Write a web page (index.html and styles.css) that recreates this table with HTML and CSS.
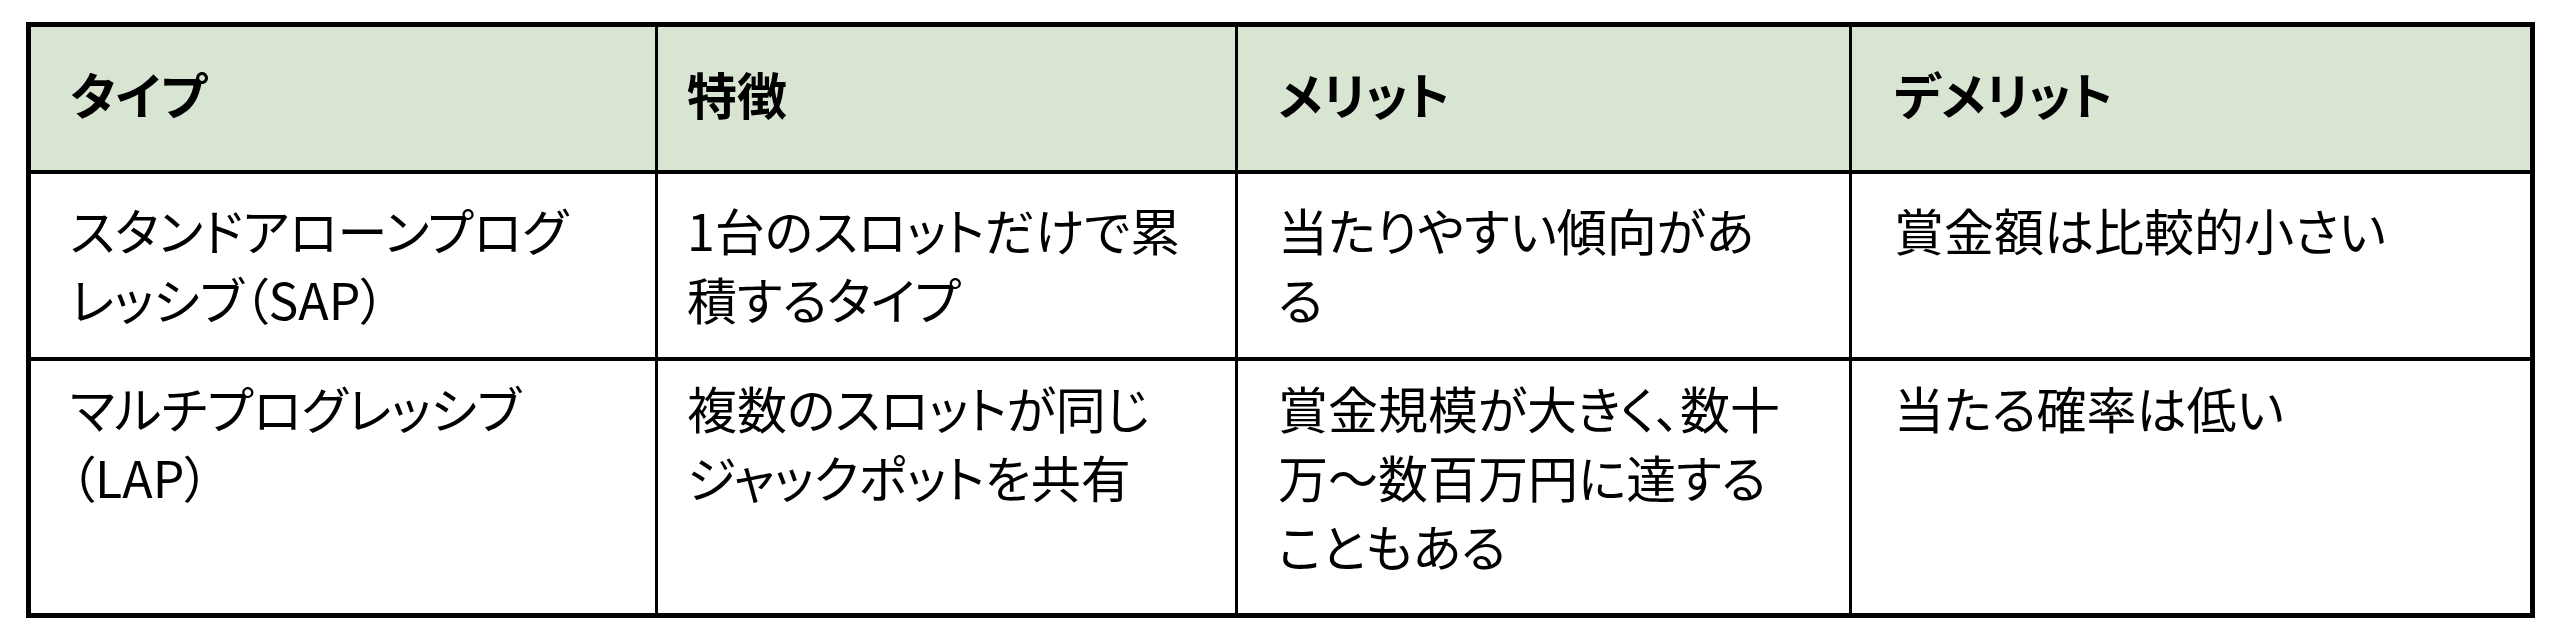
FILE: index.html
```html
<!DOCTYPE html>
<html lang="ja">
<head>
<meta charset="utf-8">
<title>プログレッシブジャックポットの種類</title>
<link rel="stylesheet" href="styles.css">
</head>
<body>
<div class="grid" role="table">
  <div class="cell head c1" role="columnheader">タイプ</div>
  <div class="cell head c2" role="columnheader">特徴</div>
  <div class="cell head c3" role="columnheader">メリット</div>
  <div class="cell head c4 last" role="columnheader">デメリット</div>

  <div class="cell r1 c1" role="cell">スタンドアローンプログレッシブ（SAP）</div>
  <div class="cell r1 c2" role="cell">1台のスロットだけで累積するタイプ</div>
  <div class="cell r1 c3" role="cell">当たりやすい傾向がある</div>
  <div class="cell r1 c4 last" role="cell">賞金額は比較的小さい</div>

  <div class="cell r2 c1 bottom" role="cell">マルチプログレッシブ（LAP）</div>
  <div class="cell r2 c2 bottom" role="cell">複数のスロットが同じジャックポットを共有</div>
  <div class="cell r2 c3 bottom" role="cell">賞金規模が大きく、数十万～数百万円に達することもある</div>
  <div class="cell r2 c4 last bottom" role="cell">当たる確率は低い</div>
</div>
</body>
</html>
```

FILE: styles.css
```css
html, body {
  margin: 0;
  padding: 0;
  background: #ffffff;
}

body {
  font-family: "Noto Sans CJK JP", "Noto Sans", sans-serif;
  color: #000000;
}

.grid {
  display: grid;
  grid-template-columns: 627px 580px 614px 678px;
  grid-template-rows: 147px 187px 252px;
  width: max-content;
  margin: 22px 0 0 26px;
  border: 5px solid #000000;
}

.cell {
  box-sizing: border-box;
  border-right: 3px solid #000000;
  border-bottom: 4px solid #000000;
  font-size: 50px;
  line-height: 69px;
  font-feature-settings: "palt" 1;
  line-break: strict;
}

.cell.last {
  border-right: none;
}

.cell.bottom {
  border-bottom: none;
}

.head {
  background: #d8e5d2;
  font-weight: 700;
  padding-top: 32px;
}

.r1 {
  padding-top: 21px;
}

.r2 {
  padding-top: 12px;
}

.c1 {
  padding-left: 39px;
  padding-right: 70px;
}

.c2 {
  padding-left: 29px;
  padding-right: 45px;
}

.c3 {
  padding-left: 40px;
  padding-right: 67px;
}

.c4 {
  padding-left: 42px;
  padding-right: 40px;
}
```
